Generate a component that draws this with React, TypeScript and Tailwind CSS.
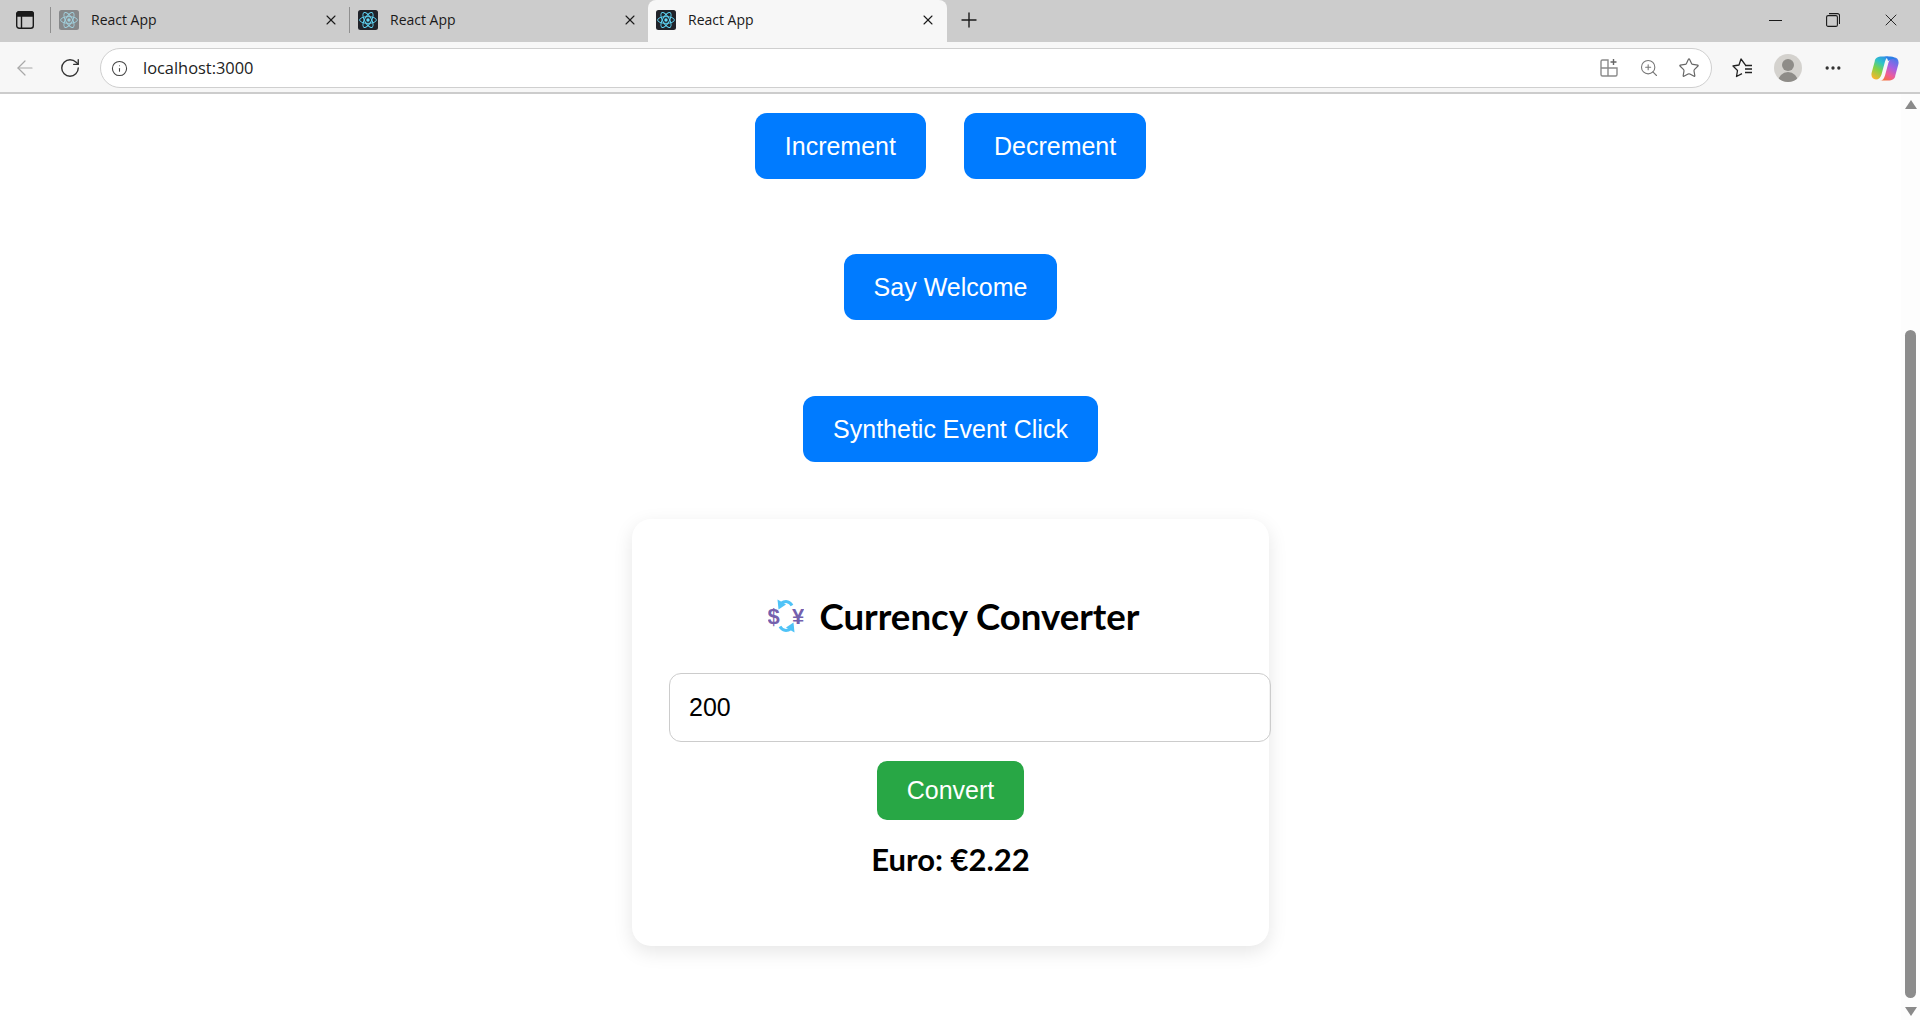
import React from "react";
import { X, Plus, ArrowLeft, RotateCw, Info, Star, ZoomIn, Ellipsis } from "lucide-react";

const ReactFavicon = ({ faded }: { faded?: boolean }) => (
  <svg width="20" height="20" viewBox="0 0 20 20" className={faded ? "shrink-0 opacity-40" : "shrink-0"}>
    <rect width="20" height="20" rx="2.5" fill="#20232a" />
    <g fill="none" stroke="#61dafb" strokeWidth="0.9">
      <ellipse cx="10" cy="10" rx="8.4" ry="3.4" />
      <ellipse cx="10" cy="10" rx="8.4" ry="3.4" transform="rotate(60 10 10)" />
      <ellipse cx="10" cy="10" rx="8.4" ry="3.4" transform="rotate(120 10 10)" />
    </g>
    <circle cx="10" cy="10" r="1.7" fill="#61dafb" />
  </svg>
);

const Tab = ({ faded, active }: { faded?: boolean; active?: boolean }) => (
  <div
    className={
      active
        ? "flex h-[42px] w-[299px] shrink-0 items-center rounded-t-lg bg-[#f7f7f7] pb-[2px] pl-[8px] pr-[11px]"
        : "flex h-[42px] w-[298px] shrink-0 items-center pb-[2px] pl-[8px] pr-[10px]"
    }
  >
    <ReactFavicon faded={faded} />
    <span className="mb-[1px] ml-[12px] flex-1 text-[14px] text-[#1a1a1a]">React App</span>
    <X size={16} strokeWidth={1.6} className="text-[#1a1a1a]" />
  </div>
);

const TabSeparator = () => <div className="mb-[2px] h-[26px] w-px shrink-0 bg-[#8f8f8f]" />;

const SidebarIcon = () => (
  <svg width="18" height="18" viewBox="0 0 18 18" fill="none" stroke="#1a1a1a" strokeWidth="1.4">
    <rect x="0.7" y="0.7" width="16.600" height="16.600" rx="2.500" />
    <path d="M0.700 3.200a2.500 2.500 0 0 1 2.500-2.500h11.600a2.500 2.500 0 0 1 2.500 2.500v1.800H0.700z" fill="#1a1a1a" />
    <path d="M5.500 5v12" />
  </svg>
);

const RestoreIcon = () => (
  <svg width="14" height="14" viewBox="0 0 14 14" fill="none" stroke="#1a1a1a" strokeWidth="1.1">
    <rect x="0.600" y="2.600" width="10.800" height="10.800" rx="1.500" />
    <path d="M3 .6h8.500a2 2 0 0 1 2 2V11" />
  </svg>
);

const FavoritesIcon = () => (
  <svg width="21" height="20" viewBox="0 0 21 20" fill="none" stroke="#222222" strokeWidth="1.3" strokeLinejoin="round">
    <path d="M13.500 7.200L9 1 7 7 1 8l4.500 4.500L4.500 18.500l5.500-2.800" />
    <path d="M13 7.500h7M13 11h7M13 14.500h7" />
  </svg>
);

const CopilotIcon = () => (
  <svg width="28" height="25" viewBox="0 0 28 25">
    <defs>
      <linearGradient id="copLeft" x1="0.75" y1="0" x2="0.25" y2="1">
        <stop offset="0" stopColor="#2f8fe8" />
        <stop offset="0.3" stopColor="#2ec4c8" />
        <stop offset="0.6" stopColor="#7ed348" />
        <stop offset="1" stopColor="#f7b52c" />
      </linearGradient>
      <linearGradient id="copRight" x1="0.75" y1="0" x2="0.25" y2="1">
        <stop offset="0" stopColor="#4a7bea" />
        <stop offset="0.4" stopColor="#a95fe0" />
        <stop offset="0.7" stopColor="#ee5c9a" />
        <stop offset="1" stopColor="#f4703c" />
      </linearGradient>
    </defs>
    <path d="M11 0.500h8c-3 0-4 2-5 5l-3.500 13c-.8 3-3 5-5.500 5-3.500 0-5.300-3-4.300-7l3-11C4 2 6.500.500 11 .5z" fill="url(#copLeft)" />
    <path d="M17 24.500H9c3 0 4-2 5-5l3.500-13c.8-3 3-5 5.500-5 3.500 0 5.300 3 4.300 7l-3 11C24 23 21.500 24.500 17 24.500z" fill="url(#copRight)" />
    <path d="M13 0.500h6.500c3 0 5 1.500 5.500 4-1-1.500-3-2-4.500-1.300L17 5c-.5-3-2-4.500-4-4.500z" fill="#2b7fe6" />
  </svg>
);

const ExchangeEmoji = () => (
  <svg width="36" height="36" viewBox="0 0 36 36" className="shrink-0">
    <path d="M13 5.500C17 2.500 21.500 3 24 7.500" fill="none" stroke="#4fc3f7" strokeWidth="3" />
    <path d="M23 30.500C19 33.500 14.500 33 12 28.500" fill="none" stroke="#4fc3f7" strokeWidth="3" />
    <path d="M9.500 1.500l1 10 7.500-5z" fill="#4fc3f7" />
    <path d="M26.500 34.500l-1-10-7.500 5z" fill="#4fc3f7" />
    <text x="5.500" y="26" textAnchor="middle" fontSize="22" fontWeight="700" fontFamily="Liberation Sans" fill="#7460ad">$</text>
    <text x="30" y="26" textAnchor="middle" fontSize="22" fontWeight="700" fontFamily="Liberation Sans" fill="#7460ad">¥</text>
  </svg>
);

const BlueButton = ({ children }: { children: React.ReactNode }) => (
  <button className="h-[66px] rounded-[12px] bg-[#007bff] px-[30px] pt-[2px] text-[25px] text-white">{children}</button>
);

const App = () => {
  return (
    <div className="flex h-screen w-full flex-col overflow-hidden bg-white font-['Liberation_Sans',sans-serif]">
      {/* tab strip */}
      <div className="flex h-[42px] shrink-0 items-center bg-[#cccccc] font-['Open_Sans',sans-serif]">
        <div className="mb-[2px] flex w-[50px] shrink-0 justify-center">
          <SidebarIcon />
        </div>
        <TabSeparator />
        <Tab faded />
        <TabSeparator />
        <Tab />
        <Tab active />
        <Plus size={24} strokeWidth={1.4} className="mb-[2px] ml-[10px] text-[#1a1a1a]" />
        <div className="mb-[2px] ml-auto flex items-center">
          <div className="flex w-[57px] justify-center pr-[2px]">
            <div className="h-px w-[13px] bg-[#1a1a1a]" />
          </div>
          <div className="flex w-[57px] justify-center pr-[1px]">
            <RestoreIcon />
          </div>
          <div className="flex w-[58px] justify-center pr-[1px]">
            <X size={20} strokeWidth={1.1} className="text-[#1a1a1a]" />
          </div>
        </div>
      </div>

      {/* toolbar */}
      <div className="flex h-[52px] shrink-0 items-center border-b-2 border-[#cccccc] bg-[#f7f7f7] pt-[2px] font-['Open_Sans',sans-serif]">
        <div className="flex w-[50px] justify-center">
          <ArrowLeft size={24} strokeWidth={1.2} className="text-[#a8a8a8]" />
        </div>
        <div className="flex w-[40px] justify-center">
          <RotateCw size={22} strokeWidth={1.5} className="text-[#333333]" />
        </div>
        <div className="ml-[10px] flex h-[40px] w-[1612px] items-center rounded-full border border-[#cfcfcf] bg-white pl-[10px] pr-[10px]">
          <Info size={17} strokeWidth={1.5} className="text-[#444444]" />
          <span className="ml-[15px] flex-1 text-[16.4px] text-[#222222]">localhost:3000</span>
          <svg width="20" height="20" viewBox="0 0 20 20" fill="none" stroke="#8a8a8a" strokeWidth="1.4" className="-ml-px">
            <path d="M2 3.5a1.5 1.5 0 0 1 1.5-1.5H9v16H3.5A1.5 1.5 0 0 1 2 16.5zM2 10h16v6.500a1.500 1.500 0 0 1-1.500 1.500H9" />
            <path d="M14.500 1v6M11.500 4h6" stroke="#666666" />
          </svg>
          <ZoomIn size={20} strokeWidth={1.3} className="ml-[20px] text-[#777777]" />
          <Star size={22} strokeWidth={1.3} className="ml-[19px] mr-[1px] text-[#666666]" />
        </div>
        <div className="ml-[20px]">
          <FavoritesIcon />
        </div>
        <div className="ml-[21px] flex h-[28px] w-[28px] items-end justify-center overflow-hidden rounded-full bg-[#d4d2ce]">
          <div className="flex flex-col items-center">
            <div className="h-[12px] w-[12px] rounded-full bg-[#8e8c88]" />
            <div className="mt-[1px] h-[10px] w-[20px] rounded-t-full bg-[#8e8c88]" />
          </div>
        </div>
        <Ellipsis size={20} strokeWidth={2} className="ml-[21px] text-[#333333]" />
        <div className="ml-[28px]">
          <CopilotIcon />
        </div>
      </div>

      {/* page */}
      <div className="flex min-h-0 flex-1">
        <div className="flex min-w-0 flex-1 flex-col items-center pt-[19px]">
          <div className="flex gap-[38px]">
            <BlueButton>Increment</BlueButton>
            <BlueButton>Decrement</BlueButton>
          </div>
          <div className="mt-[75px]">
            <BlueButton>Say Welcome</BlueButton>
          </div>
          <div className="mt-[76px]">
            <BlueButton>Synthetic Event Click</BlueButton>
          </div>

          <div className="mt-[57px] flex h-[427px] w-[637px] flex-col items-center rounded-[19px] bg-white px-[37px] pt-[75px] shadow-[0_6px_19px_rgba(0,0,0,0.1)]">
            <div className="flex h-[44px] items-center gap-[16px] pl-[6px] text-black">
              <ExchangeEmoji />
              <h2 className="font-['Lato',sans-serif] text-[36.6px] font-bold">Currency Converter</h2>
            </div>
            <input
              readOnly
              value="200"
              className="mt-[35px] h-[69px] w-[602px] shrink-0 self-start rounded-[12px] border border-[#cccccc] px-[19px] text-[25px] text-black outline-none"
            />
            <button className="mt-[19px] h-[59px] rounded-[10px] bg-[#28a745] px-[30px] pt-[1px] text-[25px] text-white">Convert</button>
            <p className="mt-[16px] font-['Lato',sans-serif] text-[31px] font-bold text-black">Euro: €2.22</p>
          </div>
        </div>

        {/* scrollbar */}
        <div className="flex w-[19px] shrink-0 flex-col items-center bg-[#fdfdfd] pt-[6px] pb-[4px]">
          <div className="h-0 w-0 border-x-[6px] border-b-[9px] border-x-transparent border-b-[#8a8a8a]" />
          <div className="mt-[221px] h-[668px] w-[11px] rounded-full bg-[#8c8c8c]" />
          <div className="mt-auto h-0 w-0 border-x-[6px] border-t-[9px] border-x-transparent border-t-[#8a8a8a]" />
        </div>
      </div>
    </div>
  );
};

export default App;
